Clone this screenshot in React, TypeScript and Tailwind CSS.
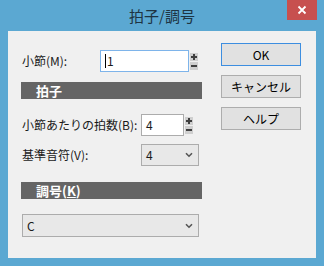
import React from 'react';

const font = { fontFamily: '"Meiryo UI", "Noto Sans CJK JP", "Noto Sans", sans-serif' };

function Spinner() {
  return (
    <div className="flex flex-col gap-[1px] ml-[1px]">
      <div className="w-[8px] h-[8px] bg-[#cfcfcf] flex items-center justify-center">
        <svg width="8" height="8" viewBox="0 0 8 8">
          <path d="M1 4h6M4 1v6" stroke="#3f3f3f" strokeWidth="2" />
        </svg>
      </div>
      <div className="w-[8px] h-[8px] bg-[#cfcfcf] flex items-center justify-center">
        <svg width="8" height="8" viewBox="0 0 8 8">
          <path d="M1 4h6" stroke="#3f3f3f" strokeWidth="2" />
        </svg>
      </div>
    </div>
  );
}

function Chevron() {
  return (
    <svg width="8" height="6" viewBox="0 0 8 6">
      <path d="M1 1.2l3 3 3-3" stroke="#555" strokeWidth="1.6" fill="none" />
    </svg>
  );
}

function SectionBar({ children }: { children: React.ReactNode }) {
  return (
    <div className="h-[17px] bg-[#656565] pl-[15px] flex items-center text-white font-bold text-[13px] leading-none">
      {children}
    </div>
  );
}

function Button({ label, primary }: { label: string; primary?: boolean }) {
  return (
    <div
      className={`w-[80px] h-[23px] bg-[#e1e1e1] border flex items-center justify-center text-[12px] text-black ${
        primary ? 'border-[#3d8ee0]' : 'border-[#adadad]'
      }`}
    >
      {label}
    </div>
  );
}

export default function App() {
  return (
    <div className="w-[324px] h-[266px] bg-[#5ba8d2] flex flex-col" style={font}>
      {/* title bar */}
      <div className="relative h-[31px] flex items-center justify-center">
        <span className="text-[15px] text-[#1e3443] pt-[1px]">拍子/調号</span>
        <div className="absolute top-0 right-[7px] w-[30px] h-[20px] bg-[#c7504f] flex items-center justify-center">
          <svg width="10" height="10" viewBox="0 0 10 10">
            <path d="M1.5 1.5l7 7M8.5 1.5l-7 7" stroke="#fff" strokeWidth="1.8" />
          </svg>
        </div>
      </div>

      {/* client area */}
      <div className="mx-[8px] h-[227px] bg-[#f0f0f0] flex pl-[13px] pt-[12px] text-[12px] text-[#1a1a1a]">
        <div className="w-[181px] flex flex-col pt-[7px]">
          <div className="h-[22px] flex items-center">
            <span className="w-[79px] pl-[1px]">小節(M):</span>
            <div className="w-[89px] h-[22px] bg-white border border-[#7eb4ea] flex items-center pl-[4px]">
              <span className="w-[1px] h-[14px] bg-black" />
              <span className="ml-[1px]">1</span>
            </div>
            <Spinner />
          </div>

          <div className="mt-[10px]">
            <SectionBar>拍子</SectionBar>
          </div>

          <div className="mt-[15px] h-[22px] flex items-center">
            <span className="w-[120px] pl-[1px]">小節あたりの拍数(B):</span>
            <div className="w-[43px] h-[22px] bg-white border border-[#acacac] flex items-center pl-[4px]">4</div>
            <Spinner />
          </div>

          <div className="mt-[8px] h-[22px] flex items-center">
            <span className="w-[120px] pl-[1px]">基準音符(V):</span>
            <div className="w-[58px] h-[22px] bg-[#e8e8e8] border border-[#acacac] flex items-center justify-between pl-[4px] pr-[5px]">
              <span>4</span>
              <Chevron />
            </div>
          </div>

          <div className="mt-[16px]">
            <SectionBar>
              調号(<span className="underline">K</span>)
            </SectionBar>
          </div>

          <div className="mt-[15px] ml-[1px] w-[177px] h-[23px] bg-[#e8e8e8] border border-[#acacac] flex items-center justify-between pl-[4px] pr-[5px]">
            <span>C</span>
            <Chevron />
          </div>
        </div>

        <div className="ml-[19px] flex flex-col gap-[9px]">
          <Button label="OK" primary />
          <Button label="キャンセル" />
          <Button label="ヘルプ" />
        </div>
      </div>
    </div>
  );
}
